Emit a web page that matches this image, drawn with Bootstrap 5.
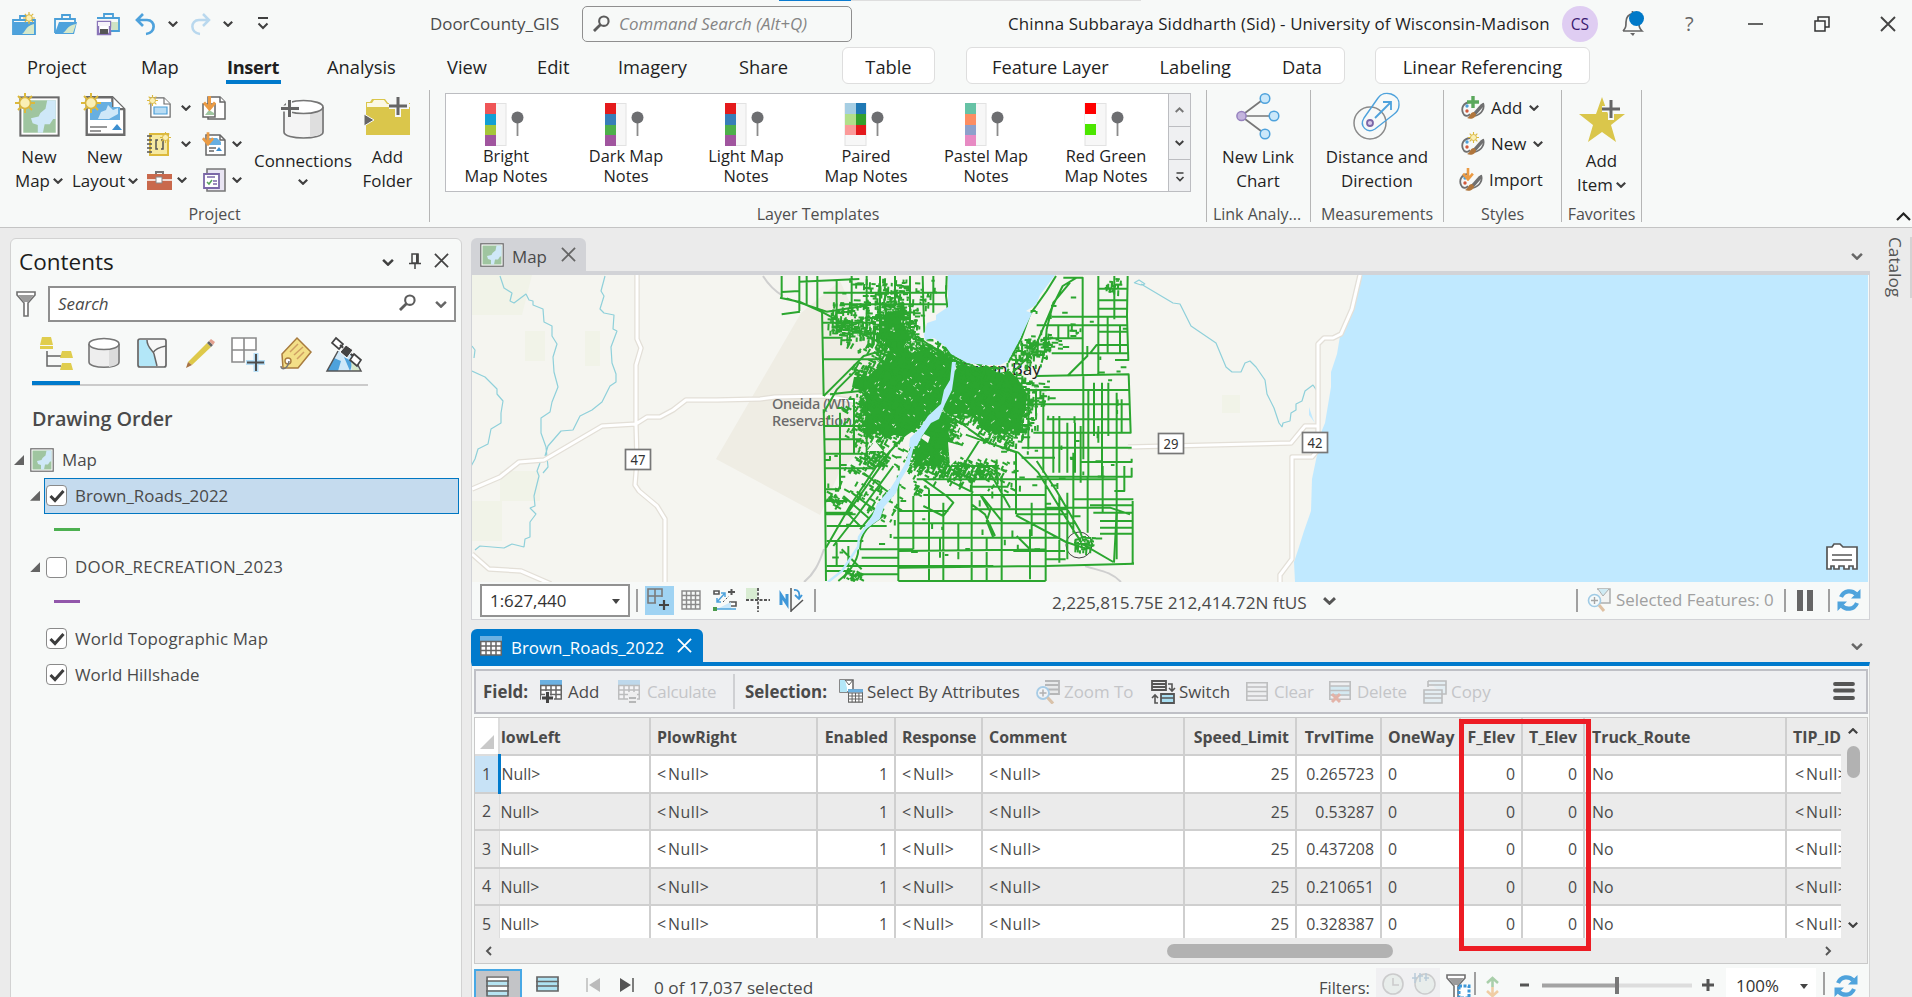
<!DOCTYPE html>
<html lang="en">
<head>
<meta charset="utf-8">
<meta name="viewport" content="width=device-width, initial-scale=1">
<title>DoorCounty_GIS</title>
<link href="https://cdn.jsdelivr.net/npm/bootstrap@5.3.0/dist/css/bootstrap.min.css" rel="stylesheet">
<style>
:root{--ink:#1f1f1f;--soft:#4a4a4a;--panel:#f7f9f8;--desk:#ebebeb;--accent:#007acc;--rule:#c6c6c6}
body{font-family:"Open Sans","Noto Sans",sans-serif;font-size:16.9px;line-height:24px;color:var(--ink);background:var(--desk);width:1912px;height:997px;overflow:hidden}
svg{display:block;flex:none;overflow:visible}
.nw,.nw *{white-space:nowrap}
.chev{width:10px;height:6px;fill:none;stroke:#404040;stroke-width:2.2}
.sep{width:2px;height:23px;background:#a0a0a0}
/* title bar */
.titlebar{display:grid;height:47px;padding-left:12px;align-items:center;
 grid-template-columns:42px 42px 39px 33px 22px 33px 34px 173px 152px 426px 554px 60px 63px 63px 66px 66px 32px;position:relative}
.titlebar .docname{color:#4b4b4b}
.cmd{width:270px;height:36px;border:1.5px solid #8f8f8f;border-radius:5px;color:#858585;font-style:italic;padding-left:10px;gap:9px}
.who{letter-spacing:.13px}
.avatar{width:36px;height:36px;background:#dfcdf2;color:#3a1a70;font-size:15.5px}
.loadline{left:779px;top:0;width:362px;height:1px;background:linear-gradient(90deg,#0a7bd0 72px,#dedede 72px)}
/* tabs */
.tabs{display:grid;height:39px;grid-template-columns:27px 114px 86px 100px 120px 90px 81px 121px 103px 124px 409px 215px;font-size:18.3px;line-height:39px}
.tabs .on{font-weight:700;letter-spacing:-.35px;position:relative;width:54px}
.tabs .on::after{content:"";position:absolute;left:-1px;right:0;top:33px;height:4px;background:var(--accent)}
.ctx{background:#fff;border:1.5px solid #dedede;border-radius:6px;height:37px;line-height:37px}
/* ribbon */
.ribbon{display:grid;grid-template-columns:430px 777px 104px 133px 118px 80px 1fr;height:142px;padding-top:4px;border-bottom:1.5px solid #c4c4c4}
.grp{height:132px;border-right:1.5px solid #b6b6b6;display:flex;flex-direction:column;justify-content:space-between}
.grp>.cap{color:#4f4f4f;font-size:16px;line-height:16px;text-align:center}
.proj{display:grid;grid-template-columns:78px 54px 61px 56px 108px 1fr;height:110px}
.big{text-align:center;padding-top:3px}
.big svg.ic{margin:0 auto 6px}
.big .chev{display:inline-block;vertical-align:3px;margin-left:3px}
.mini{display:flex;flex-direction:column}
.mini>div{height:36px;display:flex;align-items:center}
.gal{margin:3px 0 0 15px;width:746px;height:99px;background:#fff;border:1.5px solid #bcbdc1;display:flex}
.gal .it{width:120px;text-align:center;padding-top:9px;font-size:16.4px;line-height:20px}
.gal .it svg{margin:0 auto 0 38px}
.gal .sc{width:22px;background:#eff0f2;border-left:1.5px solid #bcbdc1}
.gal .sc div{height:33px;border-bottom:1.5px solid #bcbdc1}
/* work area */
.work{display:grid;grid-template-columns:10px 452px 9px 1399px 1fr;height:769px}
.contents{margin-top:10px;background:var(--panel);border:1.5px solid #d2d2d2;border-radius:6px 6px 0 0;color:var(--soft);height:760px}
.contents .ttl{font-size:22.5px;color:#1c1c1c;height:47px;padding:0 10px 0 8px}
.srch{width:408px;height:36px;border:2px solid #8f8f8f;background:#fff;font-style:italic;margin-left:12px;padding:0 9px 0 8px}
.views{display:grid;grid-template-columns:repeat(7,48px);margin-left:21px;height:64px;border-bottom:2px solid #cbcbcb;width:336px;justify-items:center;padding-top:15px;position:relative}
.views::after{content:"";position:absolute;left:0;bottom:-1px;width:48px;height:4px;background:var(--accent)}
.order{font-size:19.8px;font-weight:600;margin:20px 0 0 21px;line-height:26px;letter-spacing:-.05px}
.tree{padding-top:10px}
.tree>div{display:flex;align-items:center;height:35.8px}
.chk{width:21px;height:21px;border:1.6px solid #8a8a8a;border-radius:4px;background:#fff;margin-right:8px;display:flex;align-items:center;justify-content:center}
.sel{width:415px;height:36px;background:#c5dbee;border:1.5px solid #0077c2;padding-left:1px;margin-left:4px}
.tri{width:10px;height:10px;background:#646464;clip-path:polygon(100% 0,100% 100%,0 100%)}
.sym{width:26px;height:3px;margin:0 0 3px 43px}
/* document panes */
.dtab{height:33px;padding-left:9px;border-radius:6px 6px 0 0;width:115px;background:#d2d3d7;color:#4a4a4a;gap:8px}
.dtab span,.ttab span{padding-top:4px}
.dtab span{padding-top:5px}
.mapbox{border:1.5px solid #d2d3d7;border-top:4px solid #d2d3d7;height:349px;background:var(--panel)}
.mapbar{display:grid;height:36px;align-items:center;grid-template-columns:8px 156px 9px 36px 32px 33px 33px 35px 238px 270px 254px 11px 29px 168px 13px 31px 9px 32px;color:var(--soft)}
.scale{width:150px;height:33px;border:2px solid #929292;background:#fff;padding:2px 8px 0 8px}
.hl{width:29px;height:29px;background:#9fd3f3}
.ttab{width:232px;height:33px;background:var(--accent);color:#fff;border-radius:6px 6px 0 0;padding-left:9px;gap:9px;margin-top:9px}
.tblpane{border:1.5px solid #d4d4d4;border-top:4px solid var(--accent);background:var(--panel);height:339px;padding:3px 1px 0 2px;color:var(--soft);position:relative}
.tools{display:grid;align-items:center;height:45px;border:2px solid #bfc0c6;background:#eeeff1;
 grid-template-columns:7px 57px 28px 50px 29px 86px 12px 94px 28px 169px 28px 87px 28px 67px 28px 55px 28px 66px 28px 382px 28px}
.dim{color:#c4c5c8}svg.dim{opacity:.36}
.gridbox{margin-top:3px;border:1.5px solid #c9c9c9;height:247px;background:#ebebeb}
.clip{width:1366px;height:220px;overflow:hidden}
.attrs{table-layout:fixed;width:1366px;font-size:15.9px;line-height:24px;color:var(--soft);margin:0}
.attrs th,.attrs td{border-right:2px solid #cfcfcf;border-bottom:2px solid #cfcfcf;padding:1px 6px 0 6px;height:37.5px;overflow:hidden;white-space:nowrap;background:#fff;color:inherit;vertical-align:middle}
.attrs th{background:#ebebeb;height:37px}
.attrs tr:nth-child(even) td{background:#ebebeb}
.attrs tbody td:first-child{background:#ebebeb;border-right:1px solid #ddd;padding:0 0 0 7px}
.attrs tbody tr:first-child td:first-child{background:#c7e2f6;border-right:3px solid var(--accent)}
.attrs th:first-child{background:#fff;border-color:#ddd;padding:0}
.attrs th:nth-child(2),.attrs td:nth-child(2){padding-left:1px}
.attrs .n{text-align:right;padding-right:6px}
.attrs .nu{letter-spacing:.5px}.attrs .nu::first-letter{letter-spacing:2px}
.attrs tr>:nth-child(12){padding-left:7px}.attrs td:last-child{padding-left:8px}.attrs tr>:last-child{border-right:0;padding-right:0;text-overflow:clip}
.callout{position:absolute;left:987px;top:53px;width:132px;height:232px;border:5px solid #ed1c24}
.foot{display:grid;height:36px;align-items:center;grid-template-columns:62px 49px 33px 34px 667px 57px 70px 28px 12px 34px 22px 160px 24px 97px 11px 36px}
.vbtn{width:48px;height:34px;background:#c3c4c7;border:2px solid #47a8e5;padding:5px 0 0 10px;align-self:start;margin-top:5px}
.cat{writing-mode:vertical-rl;color:#555;font-size:17.2px;line-height:20px;margin:9px 0 0 15px}
</style>
</head>
<body class="nw">

<svg width="0" height="0" class="position-absolute">
<defs>
<symbol id="cv" viewBox="0 0 10 6"><path d="M.8 .8 5 4.8 9.2 .8"/></symbol>
<symbol id="sun" viewBox="0 0 20 20"><path d="M10 0v20M0 10h20M3 3l14 14M17 3 3 17" stroke="#dcb93c" stroke-width="2"/><circle cx="10" cy="10" r="5.5" fill="#faefb5" stroke="#d8b540" stroke-width="1.6"/></symbol>
<symbol id="thumb" viewBox="0 0 24 24"><rect x=".8" y=".8" width="22.4" height="22.4" fill="#fff" stroke="#6b6b6b" stroke-width="1.2"/><rect x="2.500" y="2.500" width="19" height="19" fill="#9fc5a0"/><path d="M21.500 2.500h-5l-1 5-3 2.500-1 2-4.500 1 1 3 3 1v4.500h3l1-5h3l2-3 1.500 0z" fill="#cfe8f8"/></symbol>
<symbol id="page" viewBox="0 0 24 24"><path d="M1 1h15l7 7v15H1z" fill="#fff" stroke="#6b6b6b" stroke-width="1.4"/><path d="M16 1v7h7" fill="#fff" stroke="#6b6b6b" stroke-width="1.3"/></symbol>
<symbol id="refresh" viewBox="0 0 24 24"><path d="M4 9C7 2 15 2 19 6M20 15C17 22 9 22 5 18" fill="none" stroke="#4fa3dc" stroke-width="4.2"/><path d="M23.500 1v9.500H14zM.5 23v-9.500H10z" fill="#4fa3dc"/></symbol>
<symbol id="mag" viewBox="0 0 18 18"><circle cx="11.500" cy="6.500" r="5" fill="none" stroke="#5c5c5c" stroke-width="2.2"/><path d="M8 10 1 17" stroke="#5c5c5c" stroke-width="3"/></symbol>
<symbol id="tick" viewBox="0 0 16 14"><path d="M1.500 7 6 11.500 14.500 2" fill="none" stroke="#3d3d3d" stroke-width="3"/></symbol>
<symbol id="ex" viewBox="0 0 16 16"><path d="M1 1 15 15M15 1 1 15" fill="none" stroke="currentColor" stroke-width="1.9"/></symbol>
<symbol id="tbl" viewBox="0 0 22 20"><path d="M.7 1h20.600v18H.7z" fill="#fff" stroke="#666" stroke-width="1.6"/><path d="M0 0h22v5H0z" fill="#6bb1e2"/><path d="M0 5.500h22M0 10h22M0 14.500h22M6 5v14M11 5v14M16 5v14" stroke="#666" stroke-width="1.5"/></symbol>
<symbol id="lst" viewBox="0 0 22 19"><path d="M.8 .8h20.400v17.400H.8zM0 5h22M0 9.500h22M0 14h22" fill="none" stroke="#6b6b6b" stroke-width="1.6"/></symbol>
<symbol id="down" viewBox="0 0 14 16"><path d="M7 0v12M1 7l6 7 6-7" fill="none" stroke="#eb9b44" stroke-width="3.200"/></symbol>
<symbol id="fun" viewBox="0 0 20 26"><path d="M1 1h18v3l-7 8v13H8V12L1 4z" fill="#fff" stroke="#707070" stroke-width="1.6"/><path d="M2 4h16l-6 7H8z" fill="#9b9b9b"/></symbol>
<symbol id="pal" viewBox="0 0 24 24"><path d="M9 6c-7 1-9 6-7 11 1 3 5 4 7 1M22 7c2 5-1 11-8 13" fill="none" stroke="#707070" stroke-width="1.8"/><path d="M12 17 20 8l3-1-1 4-7 8z" fill="#707070"/><path d="M13 16c-4 0-3 4-7 6 4 2 9 0 9-4z" fill="#b0763c"/><circle cx="6" cy="10" r="1.700" fill="#4f9fd8"/><circle cx="6" cy="15" r="1.700" fill="#d2593a"/></symbol>
<symbol id="zoomsel" viewBox="0 0 24 24"><path d="M10 1h13v14H12" fill="#eee" stroke="#666" stroke-width="1.500"/><path d="m11 1 5 7 6-7" fill="#a8dcf0" stroke="#666"/><circle cx="7.500" cy="12.500" r="6" fill="#f5fbff" stroke="#4c9fd4" stroke-width="1.6"/><path d="M4 12.500h7M7.500 9v7" stroke="#555" stroke-width="1.4"/><path d="m12 17 5 6" stroke="#c98a50" stroke-width="3"/></symbol>
<symbol id="zoomrows" viewBox="0 0 24 24"><path d="M9 1h14v13H13" fill="#ddd" stroke="#555" stroke-width="1.800"/><path d="M9 5h14M12 9.500h11" stroke="#555" stroke-width="1.800"/><circle cx="7" cy="13" r="6" fill="#f5fbff" stroke="#2b8fd4" stroke-width="1.800"/><path d="M3.500 13h7M7 9.500v7" stroke="#444" stroke-width="1.500"/><path d="m11.500 17.500 5.500 6" stroke="#b5742f" stroke-width="3.200"/></symbol>
<symbol id="pin" viewBox="0 0 13 26"><path d="M6.500 8v17" stroke="#8b8b8b" stroke-width="1.8"/><circle cx="6.500" cy="6.500" r="6" fill="#6d6e71"/></symbol>
</defs>
</svg>

<!-- Title bar -->
<header style="background:#f7f9f8">
<div class="titlebar">
  <div class="loadline position-absolute"></div>
  <svg width="24" height="22" viewBox="0 0 24 22"><path d="M1 7h22v14H1zM8 7V3h9v4" fill="none" stroke="#4a9fd8" stroke-width="1.8"/><path d="M1 9h22v12H1z" fill="#4ea2dc"/><path d="M10 21c3-1 3-8 12-10v10z" fill="#d7e8c9"/><use href="#sun" x="11" y="-1" width="12" height="12"/></svg>
  <svg width="24" height="22" viewBox="0 0 24 22"><path d="M1 20V6h20v4M8 6V2h8v4" fill="none" stroke="#4a9fd8" stroke-width="1.8"/><path d="M1 20 5 9h18l-3 12H1z" fill="#4ea2dc"/><path d="M9 20c3-1 4-8 13-9l-3 9z" fill="#d7e8c9"/></svg>
  <svg width="24" height="24" viewBox="0 0 24 24"><path d="M1 6h22v13H15M8 6V2h9v4" fill="none" stroke="#4a9fd8" stroke-width="1.8"/><path d="M14 10h8v8h-6z" fill="#cfe3c4"/><path d="M2 10h12v12H2z" fill="#fff" stroke="#8a75b8" stroke-width="2.400"/><path d="M2 10h12v4H2z" fill="#f5f2fa"/><path d="M4 17h8v5H4z" fill="#555"/></svg>
  <svg width="21" height="22" viewBox="0 0 21 22"><path d="M8 1 2 7l6 6M2 7h10c9 0 9 13-1 14" fill="none" stroke="#4ea2dc" stroke-width="2.700"/></svg>
  <svg class="chev"><use href="#cv"/></svg>
  <svg width="21" height="22" viewBox="0 0 21 22"><path d="m13 1 6 6-6 6M19 7H9C0 7 0 20 10 21" fill="none" stroke="#b9d8ee" stroke-width="2.500"/></svg>
  <svg class="chev"><use href="#cv"/></svg>
  <svg width="12" height="13" viewBox="0 0 12 13"><path d="M1 1h10M1.500 6.500 6 11l4.500-4.500" fill="none" stroke="#404040" stroke-width="2"/></svg>
  <span class="docname">DoorCounty_GIS</span>
  <div class="cmd d-flex align-items-center"><svg width="17" height="17"><use href="#mag"/></svg>Command Search (Alt+Q)</div>
  <span class="who">Chinna Subbaraya Siddharth (Sid) - University of Wisconsin-Madison</span>
  <div class="avatar rounded-circle d-flex align-items-center justify-content-center">CS</div>
  <svg width="24" height="26" viewBox="0 0 24 26"><path d="M1 20h19c-3-3-3-5-3-9 0-5-3-8-6.500-8S4 6 4 11c0 4 0 6-3 9M10.500 0v3" fill="none" stroke="#666" stroke-width="1.700"/><path d="M8 22h5l-2 3z" fill="#666"/><circle cx="14.500" cy="7.500" r="7.500" fill="#0079c8"/></svg>
  <span style="color:#666;font-size:20px">?</span>
  <svg width="15" height="15"><path d="M0 8h15" stroke="#333" stroke-width="1.500"/></svg>
  <svg width="16" height="16" fill="none" stroke="#333" stroke-width="1.500"><path d="M1 5h10v10H1zM4 5V1h11v10h-4"/></svg>
  <svg width="16" height="16" style="color:#444"><use href="#ex"/></svg>
</div>
<nav class="tabs">
  <span></span><span>Project</span><span>Map</span><span class="on">Insert</span><span>Analysis</span><span>View</span><span>Edit</span><span>Imagery</span><span>Share</span>
  <div><div class="ctx text-center" style="width:93px">Table</div></div>
  <div><div class="ctx d-flex justify-content-between" style="width:379px;padding:0 22px 0 25px"><span>Feature Layer</span><span>Labeling</span><span>Data</span></div></div>
  <div class="ctx text-center">Linear Referencing</div>
</nav>

<!-- Ribbon -->
<div class="ribbon">
  <section class="grp">
    <div class="proj">
      <div class="big"><svg class="ic" width="46" height="46" viewBox="0 0 46 46"><use href="#thumb" x="3" y="3" width="41" height="41"/><use href="#sun" x="-1" width="20" height="20"/></svg>New<br>Map<svg class="chev"><use href="#cv"/></svg></div>
      <div class="big"><svg class="ic" width="46" height="46" viewBox="0 0 46 46"><use href="#page" x="3" y="2" width="41" height="42"/><path d="M8 9h22v5h8v13H8z" fill="#67afe1"/><path d="m16 26 3-7 5-2 2-5 5 5 5-2v6l-9 5z" fill="#cfe8f8"/><path d="M8 34h17M8 38h11" stroke="#777" stroke-width="1.600"/><path d="m35 31 5 6H30z" fill="#3d8fd0"/><use href="#sun" x="-1" width="20" height="20"/></svg><span style="margin-left:-1px">New</span><br><span style="margin-left:-6px">Layout</span><svg class="chev"><use href="#cv"/></svg></div>
      <div class="mini" style="padding-left:15px">
        <div><svg width="24" height="24" viewBox="0 0 24 24"><use href="#page" x="3" y="1" width="21" height="21"/><path d="M7 11h13v7H7z" fill="#b9ddf4" stroke="#4d9fd8" stroke-width="1.200"/><use href="#sun" y="-1" width="11" height="11"/></svg><svg class="chev" style="margin-left:10px"><use href="#cv"/></svg></div>
        <div><svg width="24" height="24" viewBox="0 0 24 24"><path d="M3 2h18v21H3z" fill="#f6e9a0" stroke="#dcb93c" stroke-width="2"/><path d="M0 4h5M0 8h5M0 12h5M0 16h5M0 20h5" stroke="#555" stroke-width="1.700"/><path d="M11 8H9v9h2M14 8h2v9h-2" fill="none" stroke="#555" stroke-width="1.500"/><use href="#sun" x="13" y="0" width="11" height="11"/></svg><svg class="chev" style="margin-left:10px"><use href="#cv"/></svg></div>
        <div><svg width="25" height="19" viewBox="0 0 25 19"><path d="M9 4V1h7v3" fill="none" stroke="#777" stroke-width="2"/><path d="M0 3h25v16H0z" fill="#c9694c"/><path d="M0 9h9m6 0h10" stroke="#fff" stroke-width="1.500"/><path d="M9 6h6v6H9z" fill="#fff" stroke="#888"/></svg><svg class="chev" style="margin-left:5px"><use href="#cv"/></svg></div>
      </div>
      <div class="mini" style="padding-left:9px">
        <div><svg width="24" height="25" viewBox="0 0 24 25"><path d="M6 1h12l5 5v17H6z" fill="#fff" stroke="#666" stroke-width="1.500"/><path d="M18 1v5h5M1 8h12v13H1z" fill="#fff" stroke="#666" stroke-width="1.500"/><path d="m3 19 4-5 5 3v2z" fill="#9fc5a0"/><use href="#down" x="1" y="0" width="13" height="15"/></svg></div>
        <div><svg width="24" height="24" viewBox="0 0 24 24"><path d="M4 3h14l5 5v15H4z" fill="#fff" stroke="#666" stroke-width="1.500"/><path d="M18 3v5h5" fill="none" stroke="#666" stroke-width="1.500"/><path d="M7 6h8l4 4v3H7z" fill="#67afe1"/><path d="M7 16h7M7 19h5" stroke="#666" stroke-width="1.400"/><path d="m17 15 3 4h-6z" fill="#3d8fd0"/><use href="#down" x="0" y="0" width="12" height="14"/></svg><svg class="chev" style="margin-left:6px"><use href="#cv"/></svg></div>
        <div><svg width="24" height="25" viewBox="0 0 24 25"><path d="M5 1h18v22H5z" fill="#e9e5f3" stroke="#777" stroke-width="1.600"/><path d="M2 6h15v14H2z" fill="#fff" stroke="#7b67a8" stroke-width="1.800"/><path d="m5 14 2 2 3-4" fill="none" stroke="#57a35a" stroke-width="1.500"/><path d="M5 9h8M11 13h4M11 16h4" stroke="#7b67a8" stroke-width="1.400"/></svg><svg class="chev" style="margin-left:6px"><use href="#cv"/></svg></div>
      </div>
      <div class="big"><svg class="ic" width="44" height="48" viewBox="0 0 44 48" style="margin-bottom:8px"><path d="M3 14v25c0 8 39 8 39 0V14" fill="#f4f4f4" stroke="#757575" stroke-width="1.700"/><path d="M29 19v25c8-1 12-3 12-5V14z" fill="#dedede"/><ellipse cx="22.500" cy="14" rx="19.500" ry="6.500" fill="#fff" stroke="#757575" stroke-width="1.700"/><path d="M8 6v18M0 15.500h18" stroke="#f7f9f8" stroke-width="6"/><path d="M8.500 7v17M0 15.500h18" stroke="#666" stroke-width="3"/></svg>Connections<br><svg class="chev" style="vertical-align:6px;margin-left:0"><use href="#cv"/></svg></div>
      <div class="big" style="padding-right:11px"><svg class="ic" width="47" height="46" viewBox="0 0 47 46"><path d="M2 42V9h4l2-3h13l3 4h22v32z" fill="#dac64b"/><path d="M3 14v-4h5l2-3h10l3 4h23v3z" fill="#fbf8e5"/><path d="m0 21 10 6-10 6z" fill="#666" stroke="#f7f9f8"/><path d="M34 4v20M25 13h20" stroke="#f7f9f8" stroke-width="6"/><path d="M34 4v18M25 13h18" stroke="#666" stroke-width="3"/></svg>Add<br>Folder</div>
    </div>
    <div class="cap">Project</div>
  </section>
  <section class="grp">
    <div class="gal">
      <div class="it"><svg width="42" height="43"><rect x="11" y=".5" width="11" height="42" fill="#f7f7f7" stroke="#e2e2e2"/><path d="M1 0h11v11H1z" fill="#ef5557"/><path d="M1 11h11v11H1z" fill="#139fd3"/><path d="M1 22h11v10H1z" fill="#a5c639"/><path d="M1 32h11v11H1z" fill="#a0559e"/><use href="#pin" x="27" y="8" width="13" height="26"/></svg>Bright<br>Map Notes</div>
      <div class="it"><svg width="42" height="43"><rect x="11" y=".5" width="11" height="42" fill="#f7f7f7" stroke="#e2e2e2"/><path d="M1 0h11v11H1z" fill="#e41a1c"/><path d="M1 11h11v11H1z" fill="#377eb8"/><path d="M1 22h11v10H1z" fill="#4daf4a"/><path d="M1 32h11v11H1z" fill="#a0559e"/><use href="#pin" x="27" y="8" width="13" height="26"/></svg>Dark Map<br>Notes</div>
      <div class="it"><svg width="42" height="43"><rect x="11" y=".5" width="11" height="42" fill="#f7f7f7" stroke="#e2e2e2"/><path d="M1 0h11v11H1z" fill="#e41a1c"/><path d="M1 11h11v11H1z" fill="#377eb8"/><path d="M1 22h11v10H1z" fill="#4daf4a"/><path d="M1 32h11v11H1z" fill="#a0559e"/><use href="#pin" x="27" y="8" width="13" height="26"/></svg>Light Map<br>Notes</div>
      <div class="it"><svg width="42" height="43"><rect x="1" y=".5" width="21" height="42" fill="#f7f7f7" stroke="#e2e2e2"/><path d="M1 0h11v11H1z" fill="#a6cee3"/><path d="M12 0h10v11H12z" fill="#1f78b4"/><path d="M1 11h11v11H1z" fill="#b2df8a"/><path d="M12 11h10v11H12z" fill="#33a02c"/><path d="M1 22h11v10H1z" fill="#fb9a99"/><path d="M12 22h10v10H12z" fill="#e31a1c"/><use href="#pin" x="27" y="8" width="13" height="26"/></svg>Paired<br>Map Notes</div>
      <div class="it"><svg width="42" height="43"><rect x="11" y=".5" width="11" height="42" fill="#f7f7f7" stroke="#e2e2e2"/><path d="M1 0h11v11H1z" fill="#66c2a5"/><path d="M1 11h11v11H1z" fill="#fc8d62"/><path d="M1 22h11v10H1z" fill="#8da0cb"/><path d="M1 32h11v11H1z" fill="#e78ac3"/><use href="#pin" x="27" y="8" width="13" height="26"/></svg>Pastel Map<br>Notes</div>
      <div class="it"><svg width="42" height="43"><rect x="1" y=".5" width="21" height="42" fill="#f7f7f7" stroke="#e2e2e2"/><path d="M1 0h11v11H1z" fill="#f00"/><path d="M1 11h11v10H1z" fill="#fff"/><path d="M1 21h11v11H1z" fill="#4ce600"/><use href="#pin" x="27" y="8" width="13" height="26"/></svg>Red Green<br>Map Notes</div>
      <div class="sc ms-auto">
        <div class="d-flex align-items-center justify-content-center"><svg class="chev" style="transform:scaleY(-1);stroke:#777;width:9px"><use href="#cv"/></svg></div>
        <div class="d-flex align-items-center justify-content-center"><svg class="chev" style="width:9px"><use href="#cv"/></svg></div>
        <div class="d-flex align-items-center justify-content-center border-0"><svg width="10" height="10" viewBox="0 0 10 10" fill="none" stroke="#404040" stroke-width="1.700"><path d="M1.500 1h7M1.500 5l3.500 3.500L8.500 5"/></svg></div>
      </div>
    </div>
    <div class="cap">Layer Templates</div>
  </section>
  <section class="grp">
    <div class="big" style="padding-right:1px"><svg class="ic" width="44" height="46" viewBox="0 0 44 46"><path d="M5 23 29 5M5 23h33M5 23l24 18" stroke="#777" stroke-width="1.700"/><circle cx="5.500" cy="23" r="4.600" fill="#c3b4dd" stroke="#9783bf" stroke-width="1.500"/><g fill="#cbe8fa" stroke="#4ea2dc" stroke-width="1.500"><circle cx="29" cy="5.500" r="4.800"/><circle cx="38" cy="23" r="4.800"/><circle cx="29" cy="41" r="4.800"/></g></svg>New Link<br>Chart</div>
    <div class="cap" style="margin-left:-3px">Link Analy...</div>
  </section>
  <section class="grp">
    <div class="big"><svg class="ic" width="48" height="46" viewBox="0 0 48 46" fill="none"><circle cx="17" cy="30" r="16" stroke="#8a8a8a" stroke-width="1.500"/><path d="M11 25 25 5c6-9 22-4 21 7 0 5-3 8-6 10L22 36c-8 5-16-3-11-11z" stroke="#4ea2dc" stroke-width="1.400"/><circle cx="17" cy="30" r="3" fill="#d8cbea" stroke="#7b67a8" stroke-width="1.800"/><path d="M22 25 38 9M30 9h8v8" stroke="#4ea2dc" stroke-width="1.800"/></svg>Distance and<br>Direction</div>
    <div class="cap">Measurements</div>
  </section>
  <section class="grp">
    <div class="mini" style="padding-left:17px">
      <div><svg width="24" height="24"><use href="#pal" width="24" height="24"/><path d="M12 0v12M6 6h12" stroke="#5aa85c" stroke-width="3.400"/></svg><span style="margin:0 7px 0 6px">Add</span><svg class="chev"><use href="#cv"/></svg></div>
      <div><svg width="24" height="24"><use href="#pal" width="24" height="24"/><use href="#sun" x="7" y="0" width="11" height="11"/></svg><span style="margin:0 7px 0 6px">New</span><svg class="chev"><use href="#cv"/></svg></div>
      <div style="margin-left:-2px"><svg width="24" height="24"><use href="#pal" width="24" height="24"/><use href="#down" x="3" y="0" width="12" height="13"/></svg><span style="margin:0 6px">Import</span></div>
    </div>
    <div class="cap">Styles</div>
  </section>
  <section class="grp">
    <div class="big"><svg class="ic" width="48" height="50" viewBox="0 0 48 50" style="margin-bottom:6px"><path d="m24 4 6 17h17L33 32l5 17-14-10L10 49l5-17L1 21h17z" fill="#dac64b"/><path d="M33 6v21M24 16h19" stroke="#f7f9f8" stroke-width="6"/><path d="M33 7v18M24 16h18" stroke="#666" stroke-width="3"/></svg>Add<br>Item<svg class="chev"><use href="#cv"/></svg></div>
    <div class="cap">Favorites</div>
  </section>
  <div class="d-flex justify-content-end align-items-end" style="padding:0 1px 6px"><svg width="15" height="9"><path d="M1 8 7.500 1.500 14 8" fill="none" stroke="#222" stroke-width="2.200"/></svg></div>
</div>
</header>

<main class="work">
  <span></span>
  <!-- Contents pane -->
  <aside class="contents">
    <div class="ttl d-flex align-items-center"><span style="margin-top:-1px">Contents</span>
      <svg class="chev ms-auto" style="width:12px;height:7px"><use href="#cv"/></svg>
      <svg width="12" height="16" style="margin:-4px 13px 0 15px"><path d="M3 1h6v9H3zM0 10.500h12M6 10v6" fill="none" stroke="#444" stroke-width="1.500"/><path d="M7 1h2.500v9H7z" fill="#444"/></svg>
      <svg width="15" height="15" style="color:#444;margin:-4px 2px 0 0"><use href="#ex"/></svg></div>
    <div class="d-flex align-items-center" style="padding-left:5px"><svg width="20" height="26"><use href="#fun"/></svg>
      <div class="srch d-flex align-items-center"><span>Search</span><svg class="ms-auto" width="17" height="17" style="margin:-3px 19px 0 0"><use href="#mag"/></svg><svg class="chev" style="width:12px;height:7px;stroke:#666;margin-right:-2px"><use href="#cv"/></svg></div></div>
    <div class="views">
      <svg width="34" height="34" viewBox="0 0 34 34"><path d="M8 14v15h14M8 19h14" fill="none" stroke="#666" stroke-width="1.500"/><path d="M3 0h9l2 8H1zM1 9h13v3H1zM23 14h9l2 7H21zM23 26h9l2 7H21z" fill="#e0cd4e"/></svg>
      <svg width="32" height="32" viewBox="0 0 32 32"><path d="M1 7v18c0 7 30 7 30 0V7" fill="#eee" stroke="#757575" stroke-width="1.600"/><path d="M21 11v19c6-1 9-3 9-5V7z" fill="#dcdcdc"/><ellipse cx="16" cy="7" rx="15" ry="5.500" fill="#fff" stroke="#757575" stroke-width="1.600"/></svg>
      <svg width="30" height="32" viewBox="0 0 30 32"><rect x="1" y="2" width="28" height="28" rx="2" fill="#f7f7f7"/><path d="M2 3h8c0 8 6 12 7 16 2 4 2 7 3 10H2z" fill="#b3e7f8"/><path d="M10 3c0 8 6 10 7 14s2 8 3 12M16 16c2-4 7-6 13-7" fill="none" stroke="#666" stroke-width="1.500"/><rect x="1" y="2" width="28" height="28" rx="2" fill="none" stroke="#666" stroke-width="1.700"/></svg>
      <svg width="30" height="32" viewBox="0 0 30 32"><path d="m3 25 19-19 4 4L7 28z" fill="#dec94a"/><path d="m1 31 2-6 4 3z" fill="#a87444"/><path d="m22 6 2-2 4 4-2 2z" fill="#666"/><path d="m24 4 2-2 4 3-2 3z" fill="#e3a190"/></svg>
      <svg width="36" height="36" viewBox="0 0 36 36"><path d="M2 1h24v12H2zM2 13h12v12H2zM14 1v12" fill="#fff" stroke="#8a8a8a" stroke-width="1.600"/><path d="M26 16v19M16 25.500h19" stroke="#b5def6" stroke-width="5"/><path d="M26 17v17M17 25.500h17" stroke="#4d4d4d" stroke-width="2"/></svg>
      <svg width="32" height="34" viewBox="0 0 32 34"><path d="M17 1 31 15 18 31H3l-1-14z" fill="#f3df87" stroke="#a87c3f" stroke-width="1.500"/><path d="m10 15 8-8M14 18l9-8M17 22l7-7" stroke="#cf9f63" stroke-width="1.500"/><circle cx="8" cy="24" r="3" fill="#fff" stroke="#a87c3f" stroke-width="1.400"/><path d="M9 24c-1 8-8 10-8 5" fill="none" stroke="#777" stroke-width="1.500"/></svg>
      <svg width="36" height="36" viewBox="0 0 36 36"><path d="M12 14 1 34h34L26 17z" fill="#cfe8f8"/><path d="M8 21 1 34h11l3-10zM27 25l-3 9-6-14z" fill="#4ea2dc"/><path d="m25 24 10 10H26z" fill="#d7e8c9"/><path d="M12 14 1 34h34L26 17" fill="none" stroke="#555" stroke-width="1.500"/><path d="m10 1 7 6-4 5-7-6zM28 17l7 6-4 6-7-6z" fill="#fff" stroke="#444" stroke-width="1.700"/><path d="M14 8l13 11" stroke="#444" stroke-width="2"/><path d="m20 8 7 5-6 8-7-6z" fill="#444" stroke="#fff"/></svg>
    </div>
    <div class="order">Drawing Order</div>
    <div class="tree">
      <div style="padding-left:3px"><span class="tri" style="margin-right:6px"></span><svg width="24" height="24" style="margin-right:8px"><use href="#thumb"/></svg>Map</div>
      <div style="padding-left:19px"><span class="tri"></span><div class="sel d-flex align-items-center"><span class="chk"><svg width="16" height="14"><use href="#tick"/></svg></span>Brown_Roads_2022</div></div>
      <div><span class="sym" style="background:#4cb050"></span></div>
      <div style="padding-left:19px"><span class="tri" style="margin-right:6px"></span><span class="chk"></span><span style="letter-spacing:.25px">DOOR_RECREATION_2023</span></div>
      <div><span class="sym" style="background:#9257ab"></span></div>
      <div style="padding-left:35px"><span class="chk"><svg width="16" height="14"><use href="#tick"/></svg></span><span style="letter-spacing:.18px">World Topographic Map</span></div>
      <div style="padding-left:35px"><span class="chk"><svg width="16" height="14"><use href="#tick"/></svg></span>World Hillshade</div>
    </div>
  </aside>
  <span></span>

  <!-- Documents: map view above, attribute table below -->
  <section>
    <div class="d-flex align-items-center justify-content-between" style="padding:10px 7px 0 0">
      <div class="dtab d-flex align-items-center"><svg width="24" height="24"><use href="#thumb"/></svg><span>Map</span><svg width="15" height="15" style="margin-left:6px;color:#666"><use href="#ex"/></svg></div>
      <svg class="chev" style="width:12px;height:7px;stroke:#666;margin-top:3px"><use href="#cv"/></svg>
    </div>
    <div class="mapbox">
      <svg width="1396" height="307" viewBox="472 274 1396 307" style="overflow:hidden;background:#f5f5f0">
        <path d="M472 274h60l-10 40h-50zM525 330h20v30h-20zM500 470h40v30h-40zM585 330h15v35h-15zM472 500h30v40h-30zM1222 394h18v18h-18z" fill="#eef2e2" opacity=".6"/>
        <path d="M801 312 716 458l104 56 20-44 60-60-60-130z" fill="#efede4"/>
        <g fill="none" stroke="#8fd0da" stroke-width="1.200" stroke-linejoin="bevel">
          <path d="m500 275 4 12 8 5-2 8 4 2 12-9 3 6 4 1v4l10 4 1 13 8 4v10l5 8-4 13 1 15 4 15-6 15-2 10-9 6v15l5 14 2 20-5 6M605 275l-4 15 3 5-4 13 4 4 10 2-1 14 4 2-6 16 1 16 4 11v8l-6 4-8 16-10 8-12 6-7 14-12 1-13 15-3 10M540 462l-3 8 2 5-5 20 1 10-5 2 6 6-6 8v15l-5 2-1 8-12-3-8 4-12-1-12-1-5 4M472 345l3 4-1 8M472 370l13 6 12 12 0 5 6 7-2 12 0 10-10 6-3 15-10 5-3 10-5 9"/>
          <path d="m1134 282 5-3 6 4-4 1-6-2m6 1 32 19 7 1 11 22 25 17 10 24 6 5h9l4-9 5-2 6 6 9 13 2 14 7 14 5 15 3 4 1-4 7-2 1-8 5-3 0-6 6-3 3-10 8-6 4 6v10"/>
        </g>
        <path d="M1362 274 1352 314l-12 21-3 18-6 18v15l-3 18-3 18-5 12-3 20-5 24-1 32-7 20-5 16-5 15 1 20h580V274z" fill="#c0e9ff"/>
        <path d="m1309 406 4 12 2 4-6-8z" fill="#c0e9ff"/>
        <g fill="none" stroke-linejoin="round">
          <path d="M637 274v64l4 9-5 17v60l1 35-2 25 4 6 18 15 8 13v65M472 488l28-12 19-15 25-2 58-34 34-2 11-7h13l13-7 13-10h31l43-1 15-2 50-1 45 8M472 553l17 15 32 2 30 13M1128 446l163-4 14-17h13M1360 274l-8 34-11 25-8 4h-9l-6 6v86l0 20-6 7h-20v102l-12 16v10" stroke="#e3dfd7" stroke-width="5.500"/>
          <path d="M472 488l28-12 19-15 25-2 58-34 34-2 11-7h13l13-7 13-10h31l43-1 15-2 50-1 45 8M637 274v64l4 9-5 17v60l1 35-2 25 4 6 18 15 8 13v65M472 553l17 15 32 2 30 13M1128 446l163-4 14-17h13M1360 274l-8 34-11 25-8 4h-9l-6 6v86l0 20-6 7h-20v102l-12 16v10" stroke="#fff" stroke-width="3"/>
        </g>
        <path d="M763 275c5 8 10 14 20 20M824 548c-5 15-10 25-20 33M1085 565c15 5 25 5 36 16" fill="none" stroke="#cfcfcf" stroke-width="2"/>
        <g font-family="Noto Sans,Open Sans,sans-serif" font-weight="500" fill="#696969" font-size="14.500"><text x="772" y="408" textLength="78">Oneida (WI)</text><text x="772" y="425" textLength="80">Reservation</text></g>
        <text x="959" y="374" textLength="82" font-size="17" fill="#222" font-family="Noto Sans,sans-serif">Green Bay</text>
        <circle cx="1079" cy="544" r="13" fill="none" stroke="#444" stroke-width="1"/>
        <!-- built-up cores where streets merge at this scale -->
        <path fill="#2ba62f" d="m880 318 8-8 10 2 4-10 6 12-4 10 6 10-6 12 8 6 12-4 10 4 6-4 12 12 2 8-6 16-8 16-14 14-10 14-12 8-10-2-8 4-8-8-6 4-8-10 4-10-8-4 6-10-4-10-10-4 2-10 14 0 8-8 10-8 4-12-10-10zM954 370l8-8 12 6 14-2 10 6 12-2 8 8 8 14 0 16-4 10-2 16-12-4-12 4-14-6-6-10-12-6-14 2-12-8 0-16zM932 416l12-6 8 8-4 12 4 12-6 14-6 10-14-2-10 2 2-16 4-14z"/>
        <path id="fine" fill="none" stroke="#2ba62f" stroke-width="2"/>
        <path id="gaps" fill="none" stroke="#eef0e6" stroke-width=".9"/>
        <g fill="none" stroke="#2ba62f" stroke-width="6" stroke-linejoin="round" transform="translate(780 265) scale(.33333)">
          <path d="M5 30V95M58 30v105M58 47l180-8M5 78l53-3M5 145l55-8M0 95l60 13 70 32 110 60 100 50M20 97l120 40 130-20M126 130l5 260M131 430l3 130 4 385M80 30v90M112 30v100M170 40v160M215 30v120M260 30v150M300 30v190M345 30v90M390 30v160M428 30l2 80 3 90M460 30v110M500 30l-2 60 5 40M130 80h370M180 115h320M128 170h160M128 215h60M128 280h180M410 210l90 65 70 30 100 2M405 225l60 50 70 20"/>
          <path d="M131 390l50-50 70-70 70-20M150 385l90-10 60 40M131 440l40-70 60-60M134 480h130M134 520h110M134 563h130M134 607h150M136 670h40l10-25M136 705h60M138 740h80M140 780h180M140 825h110M137 745h90M180 440v230M222 400v160M260 410v160M150 570v12h-15"/>
          <path d="M138 845 210 720l80-120 110-120M160 840l70-90 110-150M200 745l120-170M240 790l90-110 60-100M215 680l80 60M250 620l90 70M190 690l80 70M200 740l40 40M240 850c0-60 40-80 70-100M235 850c0 40-40 80-60 95M138 915h80M170 830v70M205 840v60M185 850l60 60M140 900h100M240 850h160M245 875h110M240 900h400M225 925h130"/>
          <path d="M828 30 800 75 750 145 725 215 685 290M890 35l-42 25-30 60-60 140-60 60M870 50l-50 60-20 80-5 60-10 40M850 35h58v295M955 30v300M983 155v105M1003 30v130M1020 175v90M1043 30l-2 120 4 132h-40M955 68h88M955 103h88M955 128h88M815 152h228M770 178h273M835 180v36M865 180v36M790 217h120M955 197h88M815 262h228M930 262l20-25h93M770 330l276-5 6 175h-52M730 372h320M740 415h310M800 460h250M760 500h240M725 545h330M725 575h100M900 588h155v-10M1055 605v27H770M910 330v250M862 330l60-60v-30M885 470v150M862 470v150M820 450v170M838 450v170M790 380v240M768 370v80M745 370v180M902 480v170M925 370v260M942 350v160M966 350v280M985 350v160M1010 380v500M1025 400v100M1033 600v75h-30M955 480v50"/>
          <path d="M525 460l100 70 90 30 60 60 110 180 20 30M540 500l170 60M770 585l60 90 70 120 10 30M708 748l150 80 60 20M860 745l-150 0M750 790v150M900 830l100 58M355 640v305M400 690v160M447 670v275M490 710v235M535 770v110M575 640v305M620 815v130M665 630v315M708 560v185M755 710v100M797 640v305M838 690v200M862 680v200M880 560v240M923 630v170M968 600v140M1010 740l-8 150M1058 705v190M410 640h600M575 662h110M430 687h370M880 700h180M800 725h190l60 20M355 735h150M575 730h290M355 772h340M480 772h400M340 815h500M355 855l440-5M700 855h155M480 815v60M930 718h130M940 740h118M960 765h98M960 785h98M960 803h98M355 905l442-5 265-7M355 945h442M797 880h60M430 640l70 50 20 20-30 40-60-30M630 620l40 70 20 35M600 685l30 50-10 30 20 50M575 715l40 30 30 65M605 690l60 75M710 810l40 40M550 530l-60 80M600 520l-70 110M500 600h150v30M500 640l80 40"/>
        </g>
        <path d="M948 274v32l-12 8v5l-9 3-3 12 1 5 9-2 12 9 5 7 6 3 10 6 20 2 13 0 8-4 10-18 14-30-6-2 10-6 4-10 9-12 6-8z" fill="#c0e9ff"/>
        <path d="M956 361h-4l-2 18-6 10-3 14-13 12-8 12-10 10-1 9 8-1 5-10 9-13 8-4 6-15 7-14z" fill="#c0e9ff"/>
        <path d="m914 445-5 20-9 15-4 12-12 14-4 12-14 10h-3l9-13 5-12 13-15 7-11 8-14 6-18z" fill="#c0e9ff"/>
        <path d="m866 526-7 10-1 10-8 12-8 12-14 11" fill="none" stroke="#c0e9ff" stroke-width="2.400"/>
        <path d="m867 450 8-10 8 10zM924 433l6 3-2 6-7-5zM948 441l14 4-2 10-10 10zM962 424l6 4-3 8-6-6z" fill="#f5f5f0"/>
        <g font-family="Noto Sans,sans-serif" font-size="15" fill="#333" text-anchor="middle">
          <g fill="#fff" stroke="#777" stroke-width="1.700"><rect x="625.500" y="448.500" width="25" height="20"/><rect x="1158.500" y="432.500" width="25" height="20"/><rect x="1302.500" y="431.500" width="25" height="20"/></g>
          <text x="638" y="464" textLength="15" lengthAdjust="spacingAndGlyphs">47</text><text x="1171" y="448" textLength="15" lengthAdjust="spacingAndGlyphs">29</text><text x="1315" y="447" textLength="15" lengthAdjust="spacingAndGlyphs">42</text>
        </g>
        <path d="M1827 568v-22h5l2-3h6l3 3h14v22h-4v-3h-4v3h-5v-3h-5v3h-5v-3h-3v3z" fill="#fff" stroke="#555" stroke-width="1.700"/><path d="M1832 554h20M1832 559h20" stroke="#555" stroke-width="1.500"/>
      </svg>
      <div class="mapbar">
        <span></span>
        <div class="scale d-flex align-items-center justify-content-between" style="color:#333"><span>1:627,440</span><svg width="8" height="5"><path d="M0 0h8L4 5z" fill="#444"/></svg></div>
        <span class="sep"></span>
        <div class="hl"><svg width="29" height="29"><path d="M3 3h14v14H3zM3 10h14M10 3v14" fill="none" stroke="#7a7a7a" stroke-width="1.600"/><path d="M11 11h8v8h-8z" fill="#9fd3f3"/><path d="M19 14v10M14 19h10" stroke="#444" stroke-width="2.200"/></svg></div>
        <svg width="20" height="20"><path d="M1 1h18v18H1zM5.500 1v18M10 1v18M14.500 1v18M1 5.500h18M1 10h18M1 14.500h18" fill="none" stroke="#8a8a8a" stroke-width="1.400"/></svg>
        <svg width="24" height="24"><path d="M1 3h5v3H1zM17 14h6v4h-6z" fill="#fff" stroke="#555" stroke-width="1.600"/><path d="M15 4h7M18.500 1v6" stroke="#555" stroke-width="2"/><path d="m4 21 14-7v7z" fill="#cbe8fa"/><path d="M4 14 12 5M8 5h4v4M4 10v4h4M3 21h20" fill="none" stroke="#4ea2dc" stroke-width="1.500"/><path d="m10 14 6-6" stroke="#555" stroke-dasharray="2 2"/><path d="M0 19h4v4H0z" fill="#4a9a4d"/></svg>
        <svg width="24" height="24"><path d="M0 0h11v11H0z" fill="#d8ecd2"/><path d="M0 12h24M12 0v24" stroke="#555" stroke-width="1.800" stroke-dasharray="3 1.500"/></svg>
        <svg width="25" height="24"><path d="M2 17V7l6 9V6" fill="none" stroke="#3f97d8" stroke-width="3"/><path d="M12 0v24M12 23 24 12" stroke="#555" stroke-width="1.500"/><path d="M15 2c5-1 6 4 5 8M16 7l4 4 3-4" fill="none" stroke="#3f97d8" stroke-width="1.800"/></svg>
        <span class="sep"></span>
        <span style="font-size:17.200px;padding-top:5px">2,225,815.75E 212,414.72N ftUS</span>
        <svg class="chev" style="width:13px;height:8px;margin:2px 0 0 1px;stroke:#555"><use href="#cv"/></svg>
        <span class="sep"></span>
        <svg width="24" height="24" opacity=".5"><use href="#zoomsel"/></svg>
        <span style="color:#a0a0a0">Selected Features: 0</span>
        <span class="sep"></span>
        <svg width="17" height="21"><path d="M0 0h6v21H0zM10 0h6v21h-6z" fill="#666"/></svg>
        <span class="sep"></span>
        <svg width="24" height="24"><use href="#refresh"/></svg>
      </div>
    </div>

    <div class="d-flex align-items-center justify-content-between" style="padding-right:7px">
      <div class="ttab d-flex align-items-center"><svg width="22" height="20"><use href="#tbl"/></svg><span>Brown_Roads_2022</span><svg width="15" height="15" style="margin-left:4px"><use href="#ex"/></svg></div>
      <svg class="chev" style="width:12px;height:7px;stroke:#666;margin-top:10px"><use href="#cv"/></svg>
    </div>
    <div class="tblpane">
      <div class="tools">
        <span></span><b>Field:</b>
        <svg width="22" height="24"><use href="#tbl" width="22" height="20"/><path d="M1 18h13M7.500 11v13" stroke="#eeeff1" stroke-width="5"/><path d="M2 18h11M7.500 12v11" stroke="#444" stroke-width="3"/></svg><span>Add</span>
        <svg class="dim" width="22" height="24"><use href="#tbl" width="22" height="20"/><path d="M10 12h9v12h-9z" fill="#eee"/><path d="M11 18h7M11 22h7" stroke="#555" stroke-width="2"/></svg><span class="dim" style="letter-spacing:-.3px">Calculate</span>
        <span style="width:2px;height:35px;background:#cfd0d3"></span><b>Selection:</b>
        <svg width="24" height="25"><path d="M1 1h13v12H1z" fill="#fff" stroke="#666" stroke-width="1.500"/><path d="M1 1h5l2 8v4H1z" fill="#b3e7f8"/><path d="m6 1 4 5 4-5" fill="none" stroke="#666"/><use href="#tbl" x="9" y="9" width="15" height="16"/></svg><span>Select By Attributes</span>
        <svg class="dim" width="24" height="24"><use href="#zoomrows"/></svg><span class="dim">Zoom To</span>
        <svg width="24" height="24"><path d="M1 1h14v9H1zM1 4h14M1 7h14" fill="none" stroke="#555" stroke-width="1.800"/><path d="M10 14h13v9H10z" fill="#a9dff2" stroke="#555" stroke-width="1.800"/><path d="M10 18h13M17 4h4v7M18 8l3 3 3-3M7 23H4v-8M1 18l3-3 3 3" fill="none" stroke="#555" stroke-width="1.600"/></svg><span>Switch</span>
        <svg class="dim" width="22" height="19"><use href="#lst"/></svg><span class="dim" style="letter-spacing:-.2px">Clear</span>
        <svg class="dim" width="22" height="22"><path d="M0 5h22v10H0z" fill="#a9dff2"/><use href="#lst" width="22" height="19"/><path d="m3 13 8 8M11 13l-8 8" stroke="#d24a2a" stroke-width="3"/></svg><span class="dim" style="letter-spacing:-.2px">Delete</span>
        <svg class="dim" width="24" height="24"><path d="M5 1h18v13h-4M5 5h18M5 1v6" fill="#d4eef8" stroke="#666" stroke-width="1.600"/><path d="M1 10h18v13H1zM1 14h18M1 18h18" fill="#d4eef8" stroke="#666" stroke-width="1.600"/></svg><span class="dim">Copy</span>
        <svg width="22" height="19"><path d="M2 2h18M2 8.500h18M2 16h18" stroke="#555" stroke-width="3.800" stroke-linecap="round"/></svg>
      </div>
      <div class="gridbox d-flex flex-column">
        <div class="d-flex">
          <div class="clip">
            <table class="attrs">
              <colgroup id="cols"></colgroup>
              <thead><tr><th><svg width="14" height="14" style="margin:12px 0 0 5px"><path d="M14 0v14H0z" fill="#c9c9c9"/></svg></th><th>lowLeft</th><th>PlowRight</th><th class="n">Enabled</th><th style="letter-spacing:-.15px">Response</th><th>Comment</th><th class="n">Speed_Limit</th><th class="n">TrvlTime</th><th>OneWay</th><th class="n">F_Elev</th><th class="n">T_Elev</th><th>Truck_Route</th><th>TIP_ID</th></tr></thead>
              <tbody id="rows"></tbody>
            </table>
          </div>
          <div class="d-flex flex-column align-items-center" style="width:24px;height:220px;padding:10px 0 10px">
            <svg class="chev" style="transform:scaleY(-1)"><use href="#cv"/></svg>
            <span class="rounded-pill" style="width:13px;height:32px;background:#b2b2b2;margin-top:12px"></span>
            <svg class="chev mt-auto"><use href="#cv"/></svg>
          </div>
        </div>
        <div class="d-flex align-items-center" style="height:25px;padding:0 36px 0 11px">
          <svg width="6" height="10" fill="none" stroke="#555" stroke-width="1.900"><path d="M5 1 1 5l4 4"/></svg>
          <span class="rounded-pill" style="width:226px;height:14px;background:#b2b2b2;margin-left:675px"></span>
          <svg class="ms-auto" width="6" height="10" fill="none" stroke="#555" stroke-width="1.900"><path d="m1 1 4 4-4 4"/></svg>
        </div>
      </div>
      <div class="callout"></div>
      <div class="foot">
        <div class="vbtn"><svg width="23" height="21"><path d="M0 0h23v21H0z" fill="#fff"/><path d="M0 14h23v6H0zM0 5h23v4H0z" fill="#b6e4f2"/><path d="M1 1h21v19H1zM0 5h23M0 10h23M0 15h23" fill="none" stroke="#666" stroke-width="1.700"/></svg></div>
        <svg width="23" height="16"><path d="M1 1h21v14H1z" fill="#aee3f3"/><path d="M1 1h21v14H1zM0 5.500h23M0 10h23" fill="none" stroke="#666" stroke-width="1.700"/></svg>
        <svg width="14" height="14" style="margin:3px 0 0 1px"><path d="M1 0v14" stroke="#bbb" stroke-width="1.500"/><path d="M14 0v14L3 7z" fill="#bbb"/></svg>
        <svg width="14" height="14" style="margin:3px 0 0 2px"><path d="M13 0v14" stroke="#555" stroke-width="1.500"/><path d="M0 0v14l11-7z" fill="#555"/></svg>
        <span style="padding-top:8px;font-size:17.200px;margin-left:2px">0 of 17,037 selected</span>
        <span style="padding-top:8px;font-size:16.500px">Filters:</span>
        <div class="d-flex align-items-center gap-2" style="width:64px;height:32px;background:#f0f0f2;padding-left:6px"><svg width="22" height="22" opacity=".35" fill="none" stroke="#888" stroke-width="1.600"><circle cx="11" cy="11" r="10" fill="#dbe9df"/><path d="M11 5v7h6"/></svg><svg width="24" height="22" opacity=".35" fill="none" stroke="#888" stroke-width="1.500"><circle cx="13" cy="11" r="10" fill="#dbe9df"/><path d="M3 0v10M0 5h5M8 0v9M6 3h5M14 0v8M12 5h5" stroke="#58a"/></svg></div>
        <svg width="25" height="26" style="margin-top:6px"><use href="#fun" width="20" height="26"/><path d="M13 12h10v12H13z" fill="#fff" stroke="#3d97d8" stroke-width="3" stroke-dasharray="3 1.500"/></svg>
        <span class="sep"></span>
        <svg width="13" height="22" fill="none" stroke-width="2.600" style="margin-top:6px"><path d="M6.500 11V2M1 7l5.500-5L12 7" stroke="#a9cfaa"/><path d="M6.500 11v9M1 15l5.500 5 5.500-5" stroke="#f0cda4"/></svg>
        <svg width="9" height="4" style="margin-top:3px"><path d="M0 2h9" stroke="#555" stroke-width="3"/></svg>
        <svg width="150" height="17" style="margin-top:3px"><path d="M0 8.500h73" stroke="#a3a3a3" stroke-width="4"/><path d="M77 8.500h73" stroke="#ddd" stroke-width="4"/><path d="M75 0v17" stroke="#777" stroke-width="4"/></svg>
        <svg width="12" height="12" style="margin-top:3px"><path d="M6 0v12M0 6h12" stroke="#555" stroke-width="3"/></svg>
        <div class="d-flex align-items-center justify-content-between" style="width:90px;height:32px;background:#fff;padding:5px 8px 0 10px;color:#333">100%<svg width="8" height="5"><path d="M0 0h8L4 5z" fill="#444"/></svg></div>
        <span class="sep"></span>
        <svg width="24" height="24" style="margin-top:5px"><use href="#refresh"/></svg>
      </div>
    </div>
  </section>
  <div class="d-flex justify-content-between"><div class="cat">Catalog</div><span style="width:2px;height:61px;background:#d3d3d3;margin-top:9px"></span></div>
</main>

<script src="https://cdn.jsdelivr.net/npm/bootstrap@5.3.0/dist/js/bootstrap.bundle.min.js"></script>
<script>
// Attribute table
document.getElementById('cols').innerHTML = [24,151,167,78,87,202,112,85,79,62,62,202,55].map(w => `<col style="width:${w}px">`).join('');
document.getElementById('rows').innerHTML = ['0.265723','0.53287','0.437208','0.210651','0.328387'].map((t, i) =>
  `<tr><td>${i+1}</td><td>Null&gt;</td><td class="nu">&lt;Null&gt;</td><td class="n">1</td><td class="nu">&lt;Null&gt;</td><td class="nu">&lt;Null&gt;</td><td class="n">25</td><td class="n">${t}</td><td>0</td><td class="n">0</td><td class="n">0</td><td>No</td><td class="nu">&lt;Null&gt;</td></tr>`).join('');

// Local streets: short block segments whose density follows the built-up areas
let s = 7;
const rnd = () => (s = (s * 16807) % 2147483647) / 2147483647;
const towns = [[893,322,18,22,1.8],[875,305,34,26,.5],[838,325,14,18,.6],[930,295,14,16,.3],[905,378,36,34,2.2],[930,362,24,18,1.9],[888,402,28,20,1.8],[868,372,10,9,1.3],
  [875,455,12,10,1.5],[1000,395,34,26,2],[967,385,18,24,2],[940,430,16,26,1.9],[925,455,18,16,1.7],[1005,425,20,16,1.6],[985,468,24,9,1.2],
  [960,470,18,10,1.1],[1028,350,18,14,1.1],[1045,342,10,9,1],[1112,285,7,7,1.1],[1083,543,9,7,2],[1076,330,8,6,.7],[854,573,8,6,1.6],[832,497,9,6,1.2],[874,458,10,8,1],[852,468,6,5,1.2],
  [860,490,22,22,.45],[885,500,18,24,.45],[1005,485,20,10,.3],[918,487,6,10,1.1],[1060,310,14,20,.22],[870,330,36,12,.9],[843,305,12,8,.5],[890,285,30,10,.6],[875,425,28,20,.9]];
const dens = (x, y) => Math.min(1, towns.reduce((a, [cx,cy,rx,ry,k]) => a + k * Math.exp(-1.1 * (((x-cx)/rx)**2 + ((y-cy)/ry)**2)), 0));
let d = '', g = '';
for (let y = 277; y < 579; y += 2.4) for (let x = 827; x < 1130; x += 2.4) {
  const p = dens(x, y), q = p * p * .8 + p * .1;
  if (p < .12 || rnd() > q) continue;
  if (x > 959 && x < 1043 && y > 358 && y < 378 && rnd() < .35) continue;
  // streets line up with the river west of it and with the section grid elsewhere
  const a = (x < 1010 && y > 340 ? .5 : .04) + (rnd() < .5 ? 0 : Math.PI / 2);
  const l = 3 + rnd() * 4, px = x + (rnd() - .5) * 2.4, py = y + (rnd() - .5) * 2.4;
  d += `M${px.toFixed(1)} ${py.toFixed(1)}l${(l * Math.cos(a)).toFixed(1)} ${(l * Math.sin(a)).toFixed(1)}`;
  if (p > .9 && rnd() < .05) g += `M${px.toFixed(1)} ${py.toFixed(1)}l${(2 * Math.cos(a)).toFixed(1)} ${(2 * Math.sin(a)).toFixed(1)}`;
}
// Rural driveways and spurs
for (let i = 0; i < 150; i++) {
  const x = 828 + rnd()*296, y = 277 + rnd()*280, l = 3 + rnd()*4;
  d += `M${x.toFixed(1)} ${y.toFixed(1)}${rnd() < .5 ? 'h' : 'v'}${l.toFixed(1)}`;
}
document.getElementById('fine').setAttribute('d', d);
document.getElementById('gaps').setAttribute('d', g);
</script>
</body>
</html>
